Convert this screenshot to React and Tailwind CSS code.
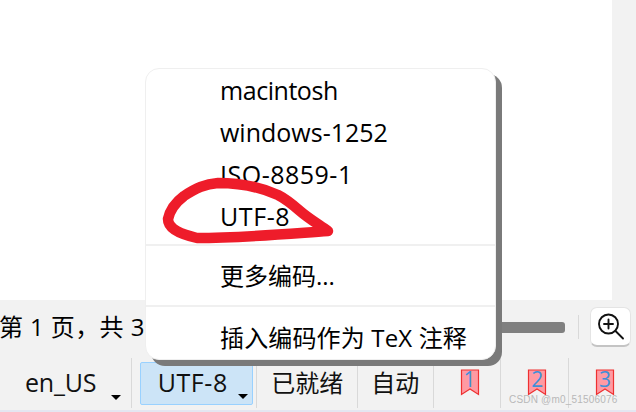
const FONT = { fontFamily: '"Open Sans", "Noto Sans CJK SC", sans-serif' };

function Caret() {
  return <span className="absolute right-[4px] bottom-[5px] w-0 h-0 border-x-[5px] border-x-transparent border-t-[5px] border-t-black" />;
}

function Bookmark({ n }) {
  return (
    <div className="relative w-[68px] h-full flex items-center justify-center border-l border-[#d9d9d9]">
      <svg width="20" height="28" viewBox="0 0 20 28" className="ml-[5px] mt-[-1px]">
        <path d="M1.5 1H18.5V25.5L10 20L1.5 25.5Z" fill="#ff9aa2" stroke="#ee3030" strokeWidth="1.2" />
      </svg>
      <span className="absolute left-[5px] right-0 top-[8px] text-center text-[21px] leading-[26px] text-[#3f8fd8]">{n}</span>
    </div>
  );
}

function Item({ children, className }) {
  return <div className={"h-[42px] pl-[74px] flex items-center text-black whitespace-nowrap " + className}>{children}</div>;
}

export default function App() {
  return (
    <div style={FONT} className="relative w-[636px] h-[412px] overflow-hidden bg-[#f2f2f2] flex flex-col">
      <div className="h-[300px] w-[612px] bg-white shrink-0" />
      <div className="h-[58px] shrink-0 flex items-center pr-[5px] text-black">
        <span className="whitespace-nowrap ml-[-1px] mt-[-4px] text-[24px] tracking-[0.4px]">第 1 页，共 3</span>
        <div className="ml-auto w-[130px] h-[11px] rounded-r-[3px] bg-[#808080] mt-[-4px]" />
        <div className="ml-[13px] w-px h-[24px] bg-[#d9d9d9] mt-[-4px]" />
        <div className="ml-[11px] w-[41px] h-[40px] rounded-[7px] border border-[#e4e4e4] border-b-[2px] border-b-[#c4c4c4] bg-white flex items-center justify-center mt-[-4px]">
          <svg width="30" height="30" viewBox="0 0 30 30" fill="none" stroke="#111" strokeWidth="1.9" strokeLinecap="round">
            <circle cx="12.5" cy="12" r="9.5" />
            <path d="M12.5 7.5V16.5M8 12H17M19.5 19L27 26.5" />
          </svg>
        </div>
      </div>
      <div className="h-[50px] shrink-0 flex items-center text-[#111]">
        <div className="relative w-[131px] h-full flex items-center pl-[25px] text-[25px] tracking-[-0.2px]">
          en_US
          <span className="absolute left-[111px] bottom-[8px] w-0 h-0 border-x-[5px] border-x-transparent border-t-[5px] border-t-black" />
        </div>
        <div className="h-full w-px bg-[#d9d9d9]" />
        <div className="relative ml-[8px] w-[114px] h-[43px] rounded-[2px] bg-[#cce4f7] border border-[#99d1ff] flex items-center pl-[17px] text-[25px] tracking-[0.6px]">
          UTF-8
          <Caret />
        </div>
        <div className="ml-[3px] h-full w-px bg-[#d9d9d9]" />
        <div className="w-[100px] text-center text-[24px]">已就绪</div>
        <div className="h-full w-px bg-[#d9d9d9]" />
        <div className="w-[75px] text-center text-[24px]">自动</div>
        <Bookmark n="1" />
        <Bookmark n="2" />
        <Bookmark n="3" />
      </div>
      <div className="h-[2px] shrink-0" />
      <div className="flex-1 bg-[#e4e6f1]" />

      <div className="absolute left-[145px] top-[68px] w-[351px] h-[292px] rounded-[14px] bg-white border border-[#efefef] shadow-[6px_6px_0_0_#7a7a7a] pt-[1px]">
        <Item className="text-[25px] tracking-[-0.45px]">macintosh</Item>
        <Item className="text-[25px]">windows-1252</Item>
        <Item className="text-[25px] tracking-[0.5px]">ISO-8859-1</Item>
        <Item className="text-[25px] tracking-[0.6px]">UTF-8</Item>
        <div className="mt-[6px] h-[2px] bg-[#f0f0f0]" />
        <div className="mt-[9px]"><Item className="text-[24px]">更多编码...</Item></div>
        <div className="mt-[8px] h-[2px] bg-[#f0f0f0]" />
        <div className="mt-[10px]"><Item className="text-[24px] tracking-[0.15px]">插入编码作为 TeX 注释</Item></div>
      </div>

      <svg className="absolute left-0 top-0 pointer-events-none" width="636" height="412" viewBox="0 0 636 412" fill="none">
        <path d="M328 231C318 224 308 218 300 211C292 204 286 199 278 195C260 187 238 183 218 183C205 184 196 188 184 196C176 202 170 210 168 219C168 227 176 233 197 238C240 238 285 234 328 231Z" stroke="#ee1c2a" strokeWidth="10.5" strokeLinejoin="round" strokeLinecap="round" />
      </svg>

      <span className="absolute left-[509px] top-[393px] text-[10px] leading-[14px] tracking-[0.2px] text-[#b8b8b8]" style={{ fontFamily: '"Liberation Sans", sans-serif' }}>CSDN @m0_51506076</span>
    </div>
  );
}
